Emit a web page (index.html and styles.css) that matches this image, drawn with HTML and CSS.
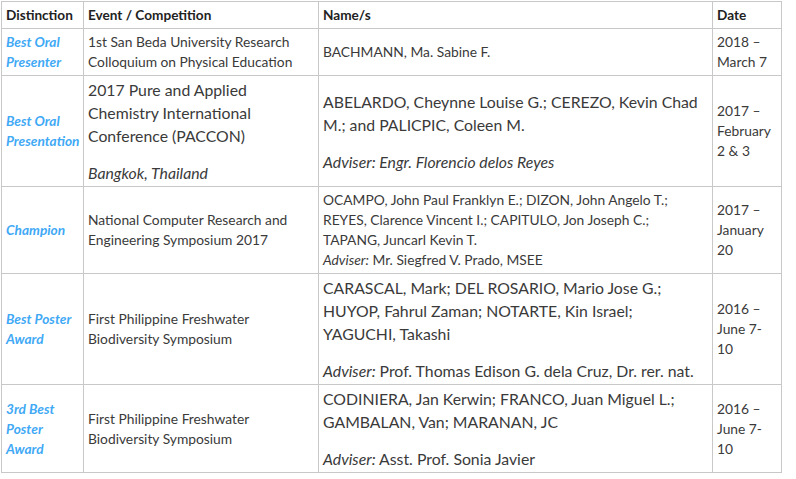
FILE: index.html
```html
<!DOCTYPE html>
<html>
<head>
<meta charset="utf-8">
<link rel="stylesheet" href="styles.css">
</head>
<body>
<table class="awards">
  <colgroup>
    <col class="c-dist">
    <col class="c-event">
    <col class="c-names">
    <col class="c-date">
  </colgroup>
  <thead>
    <tr><th>Distinction</th><th>Event / Competition</th><th>Name/s</th><th>Date</th></tr>
  </thead>
  <tbody>
    <tr>
      <td class="dist">Best Oral<br>Presenter</td>
      <td>1st San Beda University Research<br>Colloquium on Physical Education</td>
      <td>BACHMANN, Ma. Sabine F.</td>
      <td>2018 –<br>March 7</td>
    </tr>
    <tr>
      <td class="dist">Best Oral<br>Presentation</td>
      <td class="big"><p>2017 Pure and Applied<br>Chemistry International<br>Conference (PACCON)</p><p><em>Bangkok, Thailand</em></p></td>
      <td class="big"><p>ABELARDO, Cheynne Louise G.; CEREZO, Kevin Chad<br>M.; and PALICPIC, Coleen M.</p><p><em>Adviser: Engr. Florencio delos Reyes</em></p></td>
      <td>2017 –<br>February<br>2 &amp; 3</td>
    </tr>
    <tr>
      <td class="dist">Champion</td>
      <td>National Computer Research and<br>Engineering Symposium 2017</td>
      <td>OCAMPO, John Paul Franklyn E.; DIZON, John Angelo T.;<br>REYES, Clarence Vincent I.; CAPITULO, Jon Joseph C.;<br>TAPANG, Juncarl Kevin T.<br><em>Adviser:</em> Mr. Siegfred V. Prado, MSEE</td>
      <td>2017 –<br>January<br>20</td>
    </tr>
    <tr>
      <td class="dist">Best Poster<br>Award</td>
      <td>First Philippine Freshwater<br>Biodiversity Symposium</td>
      <td class="big"><p>CARASCAL, Mark; DEL ROSARIO, Mario Jose G.;<br>HUYOP, Fahrul Zaman; NOTARTE, Kin Israel;<br>YAGUCHI, Takashi</p><p><em>Adviser:</em> Prof. Thomas Edison G. dela Cruz, Dr. rer. nat.</p></td>
      <td>2016 –<br>June 7-<br>10</td>
    </tr>
    <tr>
      <td class="dist">3rd Best<br>Poster<br>Award</td>
      <td>First Philippine Freshwater<br>Biodiversity Symposium</td>
      <td class="big"><p>CODINIERA, Jan Kerwin; FRANCO, Juan Miguel L.;<br>GAMBALAN, Van; MARANAN, JC</p><p><em>Adviser:</em> Asst. Prof. Sonia Javier</p></td>
      <td>2016 –<br>June 7-<br>10</td>
    </tr>
  </tbody>
</table>
</body>
</html>
```

FILE: styles.css
```css
html, body {
  margin: 0;
  background: #fff;
}
body {
  padding: 1px 0 0 1px;
  font-family: Lato, "Open Sans", sans-serif;
  color: #3a3a3a;
}
.awards {
  border-collapse: collapse;
  table-layout: fixed;
  width: 780px;
}
.c-dist { width: 82px; }
.c-event { width: 235px; }
.c-names { width: 394px; }
.c-date { width: 69px; }
.awards th,
.awards td {
  border: 1px solid #c8c8c8;
  padding: 3px 4px;
  font-size: 13.8px;
  line-height: 20px;
  vertical-align: middle;
  text-align: left;
}
.awards th {
  font-size: 13.6px;
  font-weight: 700;
  color: #222;
}
.awards td.dist {
  font-size: 13.7px;
  font-weight: 700;
  font-style: italic;
  color: #3fa9f5;
  white-space: nowrap;
}
.awards td.big {
  font-size: 15.8px;
  line-height: 23px;
  padding-top: 2px;
  padding-bottom: 2px;
}
.awards td.big p {
  margin: 0;
}
.awards td.big p + p {
  margin-top: 14px;
}
```
